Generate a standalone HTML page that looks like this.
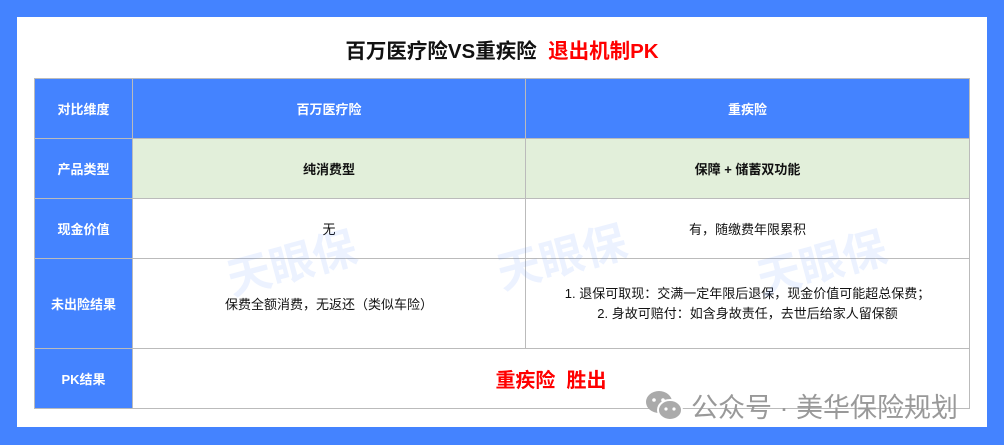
<!DOCTYPE html><html><head><meta charset="utf-8"><style>
body{margin:0;width:1004px;height:445px;background:#4483ff;font-family:"Liberation Sans","Noto Sans CJK SC",sans-serif;position:relative;overflow:hidden}
.w{position:absolute;left:17px;top:17px;width:970px;height:410px;background:#fff}
.t{position:absolute;left:0;width:1004px;top:34px;text-align:center;font-size:20.5px;font-weight:bold;color:#111}
.t span{color:#f00}
table{position:absolute;left:34px;top:78px;border-collapse:collapse;table-layout:fixed}
td{border:1px solid #bbb;text-align:center;font-size:13px;color:#111;padding:0}
tr.g td{background:#e2efda;font-weight:bold}
td.h,tr.g td.h{background:#4483ff;color:#fff;font-weight:bold}
.wm{position:absolute;font-size:44px;font-weight:bold;color:rgba(68,131,255,.10);transform:rotate(-15deg)}
.pk{color:#f00;font-size:20px;font-weight:bold}
.gz{position:absolute;left:645px;top:386px;font-size:27px;color:#999;white-space:nowrap}
</style></head><body>
<div class="w"></div>
<div class="t">百万医疗险VS重疾险 &nbsp;<span>退出机制PK</span></div>
<table>
<col style="width:98px"><col style="width:393px"><col style="width:444px">
<tr style="height:60px"><td class="h">对比维度</td><td class="h">百万医疗险</td><td class="h">重疾险</td></tr>
<tr class="g" style="height:60px"><td class="h">产品类型</td><td>纯消费型</td><td>保障 + 储蓄双功能</td></tr>
<tr style="height:60px"><td class="h">现金价值</td><td>无</td><td>有，随缴费年限累积</td></tr>
<tr style="height:90px"><td class="h">未出险结果</td><td>保费全额消费，无返还（类似车险）</td><td style="line-height:20px">1. 退保可取现：交满一定年限后退保，现金价值可能超总保费；<br>2. 身故可赔付：如含身故责任，去世后给家人留保额</td></tr>
<tr style="height:60px"><td class="h">PK结果</td><td colspan="2" class="pk">重疾险&nbsp; 胜出</td></tr>
</table>
<div class="wm" style="left:225px;top:228px">天眼保</div>
<div class="wm" style="left:495px;top:222px">天眼保</div>
<div class="wm" style="left:755px;top:228px">天眼保</div>
<div class="gz"><svg width="38" height="32" viewBox="0 0 38 32" style="vertical-align:-5px;margin-right:8px"><ellipse cx="14" cy="12" rx="13" ry="11" fill="#aaa"/><ellipse cx="25" cy="20" rx="12" ry="10" fill="#aaa" stroke="#fff" stroke-width="2"/><circle cx="9" cy="10" r="1.8" fill="#fff"/><circle cx="18" cy="10" r="1.8" fill="#fff"/><circle cx="21" cy="19" r="1.6" fill="#fff"/><circle cx="29" cy="19" r="1.6" fill="#fff"/></svg>公众号 · 美华保险规划</div>
</body></html>
